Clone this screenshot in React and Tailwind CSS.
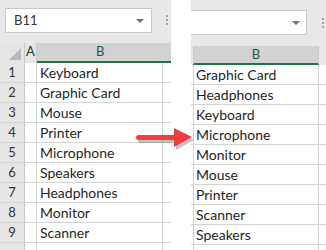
import React from "react";

const leftItems = [
  "Keyboard",
  "Graphic Card",
  "Mouse",
  "Printer",
  "Microphone",
  "Speakers",
  "Headphones",
  "Monitor",
  "Scanner",
];

const rightItems = [
  "Graphic Card",
  "Headphones",
  "Keyboard",
  "Microphone",
  "Monitor",
  "Mouse",
  "Printer",
  "Scanner",
  "Speakers",
];

const Dots = () => (
  <div className="flex flex-col gap-[2px]">
    <div className="w-[2px] h-[2px] bg-[#a0a0a0]"></div>
    <div className="w-[2px] h-[2px] bg-[#a0a0a0]"></div>
    <div className="w-[2px] h-[2px] bg-[#a0a0a0]"></div>
  </div>
);

const Caret = () => (
  <div className="w-0 h-0 border-l-[4px] border-r-[4px] border-t-[4px] border-l-transparent border-r-transparent border-t-[#707070]"></div>
);

const App = () => {
  return (
    <div
      className="relative w-[326px] h-[250px] overflow-hidden bg-white flex text-[#1f1f1f]"
      style={{ fontFamily: "Lato, 'Liberation Sans', sans-serif" }}
    >
      {/* Left sheet */}
      <div className="w-[171px] shrink-0 flex flex-col">
        <div className="h-[43px] bg-[#e8e8e8] flex items-start pt-[8px] pl-[5px]">
          <div className="w-[147px] h-[25px] bg-white border border-[#c8c8c8] flex items-center justify-between pl-[8px] pr-[7px]">
            <span className="text-[13px] text-[#333]">B11</span>
            <Caret />
          </div>
          <div className="ml-[14px] mt-[7px]">
            <Dots />
          </div>
        </div>
        <div className="h-[20px] flex">
          <div className="w-[25px] bg-[#e6e6e6] border-r border-[#c8c8c8] relative">
            <div className="absolute right-[3px] bottom-[3px] w-0 h-0 border-l-[14px] border-t-[14px] border-l-transparent border-t-transparent border-r-0 border-b-0 border-b-transparent"></div>
            <div className="absolute right-[3px] bottom-[3px] w-0 h-0 border-b-[12px] border-l-[12px] border-b-[#b8b8b8] border-l-transparent"></div>
          </div>
          <div className="w-[12px] bg-[#e6e6e6] border-r border-[#c8c8c8] flex items-center justify-center text-[13px] text-[#333] pb-[2px]">
            A
          </div>
          <div className="flex-1 bg-[#d2d2d2] border-b-2 border-[#217346] flex items-center text-[13px] text-[#1d5c3a] pl-[59px]">
            B
          </div>
        </div>
        {leftItems.map((item, i) => (
          <div key={item} className="h-[20px] flex border-b border-[#d4d4d4]">
            <div className="w-[25px] bg-[#e6e6e6] border-r border-[#c8c8c8] flex items-center justify-center text-[13px] text-[#333]">
              {i + 1}
            </div>
            <div className="w-[12px] border-r border-[#d4d4d4]"></div>
            <div className="w-[126px] border-r border-[#d4d4d4] flex items-center pl-[3px] text-[14px]">
              {item}
            </div>
            <div className="flex-1"></div>
          </div>
        ))}
        <div className="flex-1 flex">
          <div className="w-[25px] bg-[#e6e6e6] border-r border-[#c8c8c8]"></div>
          <div className="w-[12px] border-r border-[#d4d4d4]"></div>
          <div className="w-[126px] border-r border-[#d4d4d4]"></div>
        </div>
      </div>

      <div className="w-[20px] shrink-0 bg-white"></div>

      {/* Right sheet */}
      <div className="flex-1 flex flex-col">
        <div className="h-[46px] bg-[#e8e8e8] flex items-start pt-[10px]">
          <div className="w-[116px] h-[25px] bg-white border border-l-0 border-[#c8c8c8] flex items-center justify-end pr-[6px]">
            <Caret />
          </div>
          <div className="ml-[15px] mt-[8px]">
            <Dots />
          </div>
        </div>
        <div className="h-[19px] flex bg-[#e8e8e8]">
          <div className="w-[2px]"></div>
          <div className="w-[126px] bg-[#d2d2d2] border-l border-r border-[#c8c8c8] border-b-2 border-b-[#217346] flex items-center justify-center text-[13px] text-[#1d5c3a]">
            B
          </div>
        </div>
        {rightItems.map((item) => (
          <div key={item} className="h-[20px] flex border-b border-[#d4d4d4]">
            <div className="w-[2px]"></div>
            <div className="w-[126px] border-l border-r border-[#d4d4d4] flex items-center pl-[2px] text-[14px]">
              {item}
            </div>
          </div>
        ))}
        <div className="flex-1 flex">
          <div className="w-[2px]"></div>
          <div className="w-[126px] border-l border-r border-[#d4d4d4]"></div>
        </div>
      </div>

      {/* Red arrow */}
      <svg
        className="absolute left-[134px] top-[126px]"
        width="62"
        height="26"
        viewBox="0 0 62 26"
      >
        <g opacity="0.35" fill="#555">
          <rect x="4" y="12" width="40" height="5" rx="2.5" />
          <polygon points="42,4 60,14 42,24" />
        </g>
        <rect x="2" y="9" width="40" height="5" rx="2.5" fill="#ee3e3e" />
        <polygon points="40,2 58,11 40,21" fill="#ee3e3e" />
      </svg>
    </div>
  );
};

export default App;
